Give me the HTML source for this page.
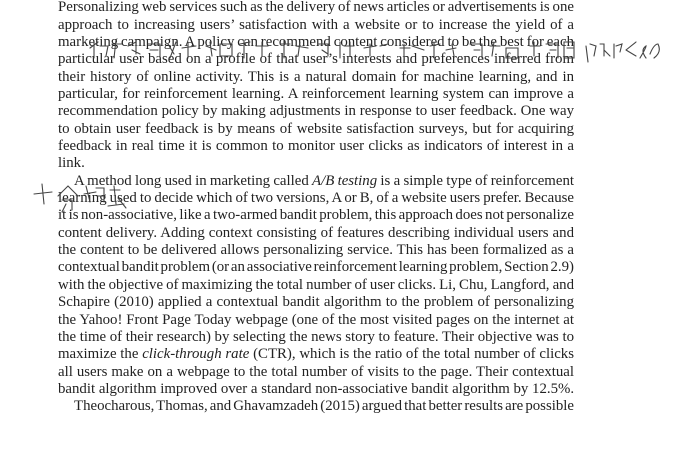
<!DOCTYPE html>
<html><head><meta charset="utf-8"><style>
html,body{margin:0;padding:0;background:#fff;width:680px;height:467px;overflow:hidden}
#t{position:absolute;left:58px;top:-0.7px;width:516px;font-family:"Liberation Serif",serif;font-size:14.85px;line-height:17.35px;color:#222}
#t div{text-align:justify;text-align-last:justify;white-space:nowrap;height:17.35px;word-spacing:-2px}
#t div.l{text-align-last:left;word-spacing:0}
#t div.i{padding-left:16px}
svg{position:absolute;left:0;top:0}
</style></head><body>
<div id="t">
<div>Personalizing web services such as the delivery of news articles or advertisements is one</div>
<div>approach to increasing users’ satisfaction with a website or to increase the yield of a</div>
<div>marketing campaign. A policy can recommend content considered to be the best for each</div>
<div>particular user based on a profile of that user’s interests and preferences inferred from</div>
<div>their history of online activity. This is a natural domain for machine learning, and in</div>
<div>particular, for reinforcement learning. A reinforcement learning system can improve a</div>
<div>recommendation policy by making adjustments in response to user feedback. One way</div>
<div>to obtain user feedback is by means of website satisfaction surveys, but for acquiring</div>
<div>feedback in real time it is common to monitor user clicks as indicators of interest in a</div>
<div class="l">link.</div>
<div class="i">A method long used in marketing called <i>A/B testing</i> is a simple type of reinforcement</div>
<div>learning used to decide which of two versions, A or B, of a website users prefer. Because</div>
<div>it is non-associative, like a two-armed bandit problem, this approach does not personalize</div>
<div>content delivery. Adding context consisting of features describing individual users and</div>
<div>the content to be delivered allows personalizing service. This has been formalized as a</div>
<div>contextual bandit problem (or an associative reinforcement learning problem, Section 2.9)</div>
<div>with the objective of maximizing the total number of user clicks. Li, Chu, Langford, and</div>
<div>Schapire (2010) applied a contextual bandit algorithm to the problem of personalizing</div>
<div>the Yahoo! Front Page Today webpage (one of the most visited pages on the internet at</div>
<div>the time of their research) by selecting the news story to feature. Their objective was to</div>
<div>maximize the <i>click-through rate</i> (CTR), which is the ratio of the total number of clicks</div>
<div>all users make on a webpage to the total number of visits to the page. Their contextual</div>
<div class="l">bandit algorithm improved over a standard non-associative bandit algorithm by 12.5%.</div>
<div class="i">Theocharous, Thomas, and Ghavamzadeh (2015) argued that better results are possible</div>
</div>
<svg width="680" height="467" fill="none" stroke="#444" stroke-width="1.1" stroke-linecap="round">
<path d="M90 48 l8 -6 M94 42 l0 16 M100 46 l8 0 l-2 10 M112 44 l10 0 M116 40 l-2 18 M128 46 l8 -4 l0 12 M132 50 l8 4"/>
<path d="M148 44 l12 0 l0 14 M150 50 l8 0 M168 44 l6 10 M176 42 l-6 16 M182 48 l14 -2 M188 42 l0 16"/>
<path d="M206 46 l10 4 M210 42 l2 14 M220 44 l12 0 l0 12 l-12 0 z M240 44 l10 -2 M244 40 l0 18 M256 46 l12 0 M262 42 l0 14"/>
<path d="M280 44 l10 0 M284 40 l0 18 M296 46 l12 2 M300 42 l-2 14 M318 44 l10 0 l0 12 M322 50 l6 4"/>
<path d="M340 42 l0 16 M344 46 l10 0 M350 42 l0 14 M364 48 l12 -2 M370 44 l0 12 M380 46 l8 -2"/>
<path d="M400 48 l10 0 M404 44 l0 14 M412 46 l12 4 M430 46 l10 -2 M434 42 l0 16 M446 50 l10 -2 M452 44 l2 12"/>
<path d="M470 44 l12 0 l0 14 M474 50 l6 0 M490 46 l10 0 M494 42 l-2 14 M506 48 l12 0 l0 10 l-12 0 z"/>
<path d="M530 46 l10 0 M534 42 l0 14 M546 44 l12 0 l0 14 M550 50 l6 0 M564 42 l10 0 l0 16 l-10 0 z M567 48 l6 0"/>
<path d="M586 46 l2 16 M590 44 l6 2 l-2 10 M600 44 l4 0 l0 12 M604 50 l6 6 M614 44 l0 14 M616 46 l6 -2 l-2 8 M626 50 l10 -8 M626 50 l10 6 M640 58 q6 -10 6 -12 q-6 4 0 12 M650 54 q4 -10 8 -10 q4 8 -4 14"/>
<path d="M34 194 l18 -2 M42 184 l2 20 M58 196 l10 -10 l10 10 M62 200 l10 0 l0 10 M66 204 l-4 8"/>
<path d="M86 186 l4 16 M84 194 l12 -2 M96 188 l8 0 l0 14 M98 196 l6 0 M110 190 l10 0 M114 186 l2 18 M108 206 l16 -2 M118 198 l8 10"/>
</svg>
</body></html>
